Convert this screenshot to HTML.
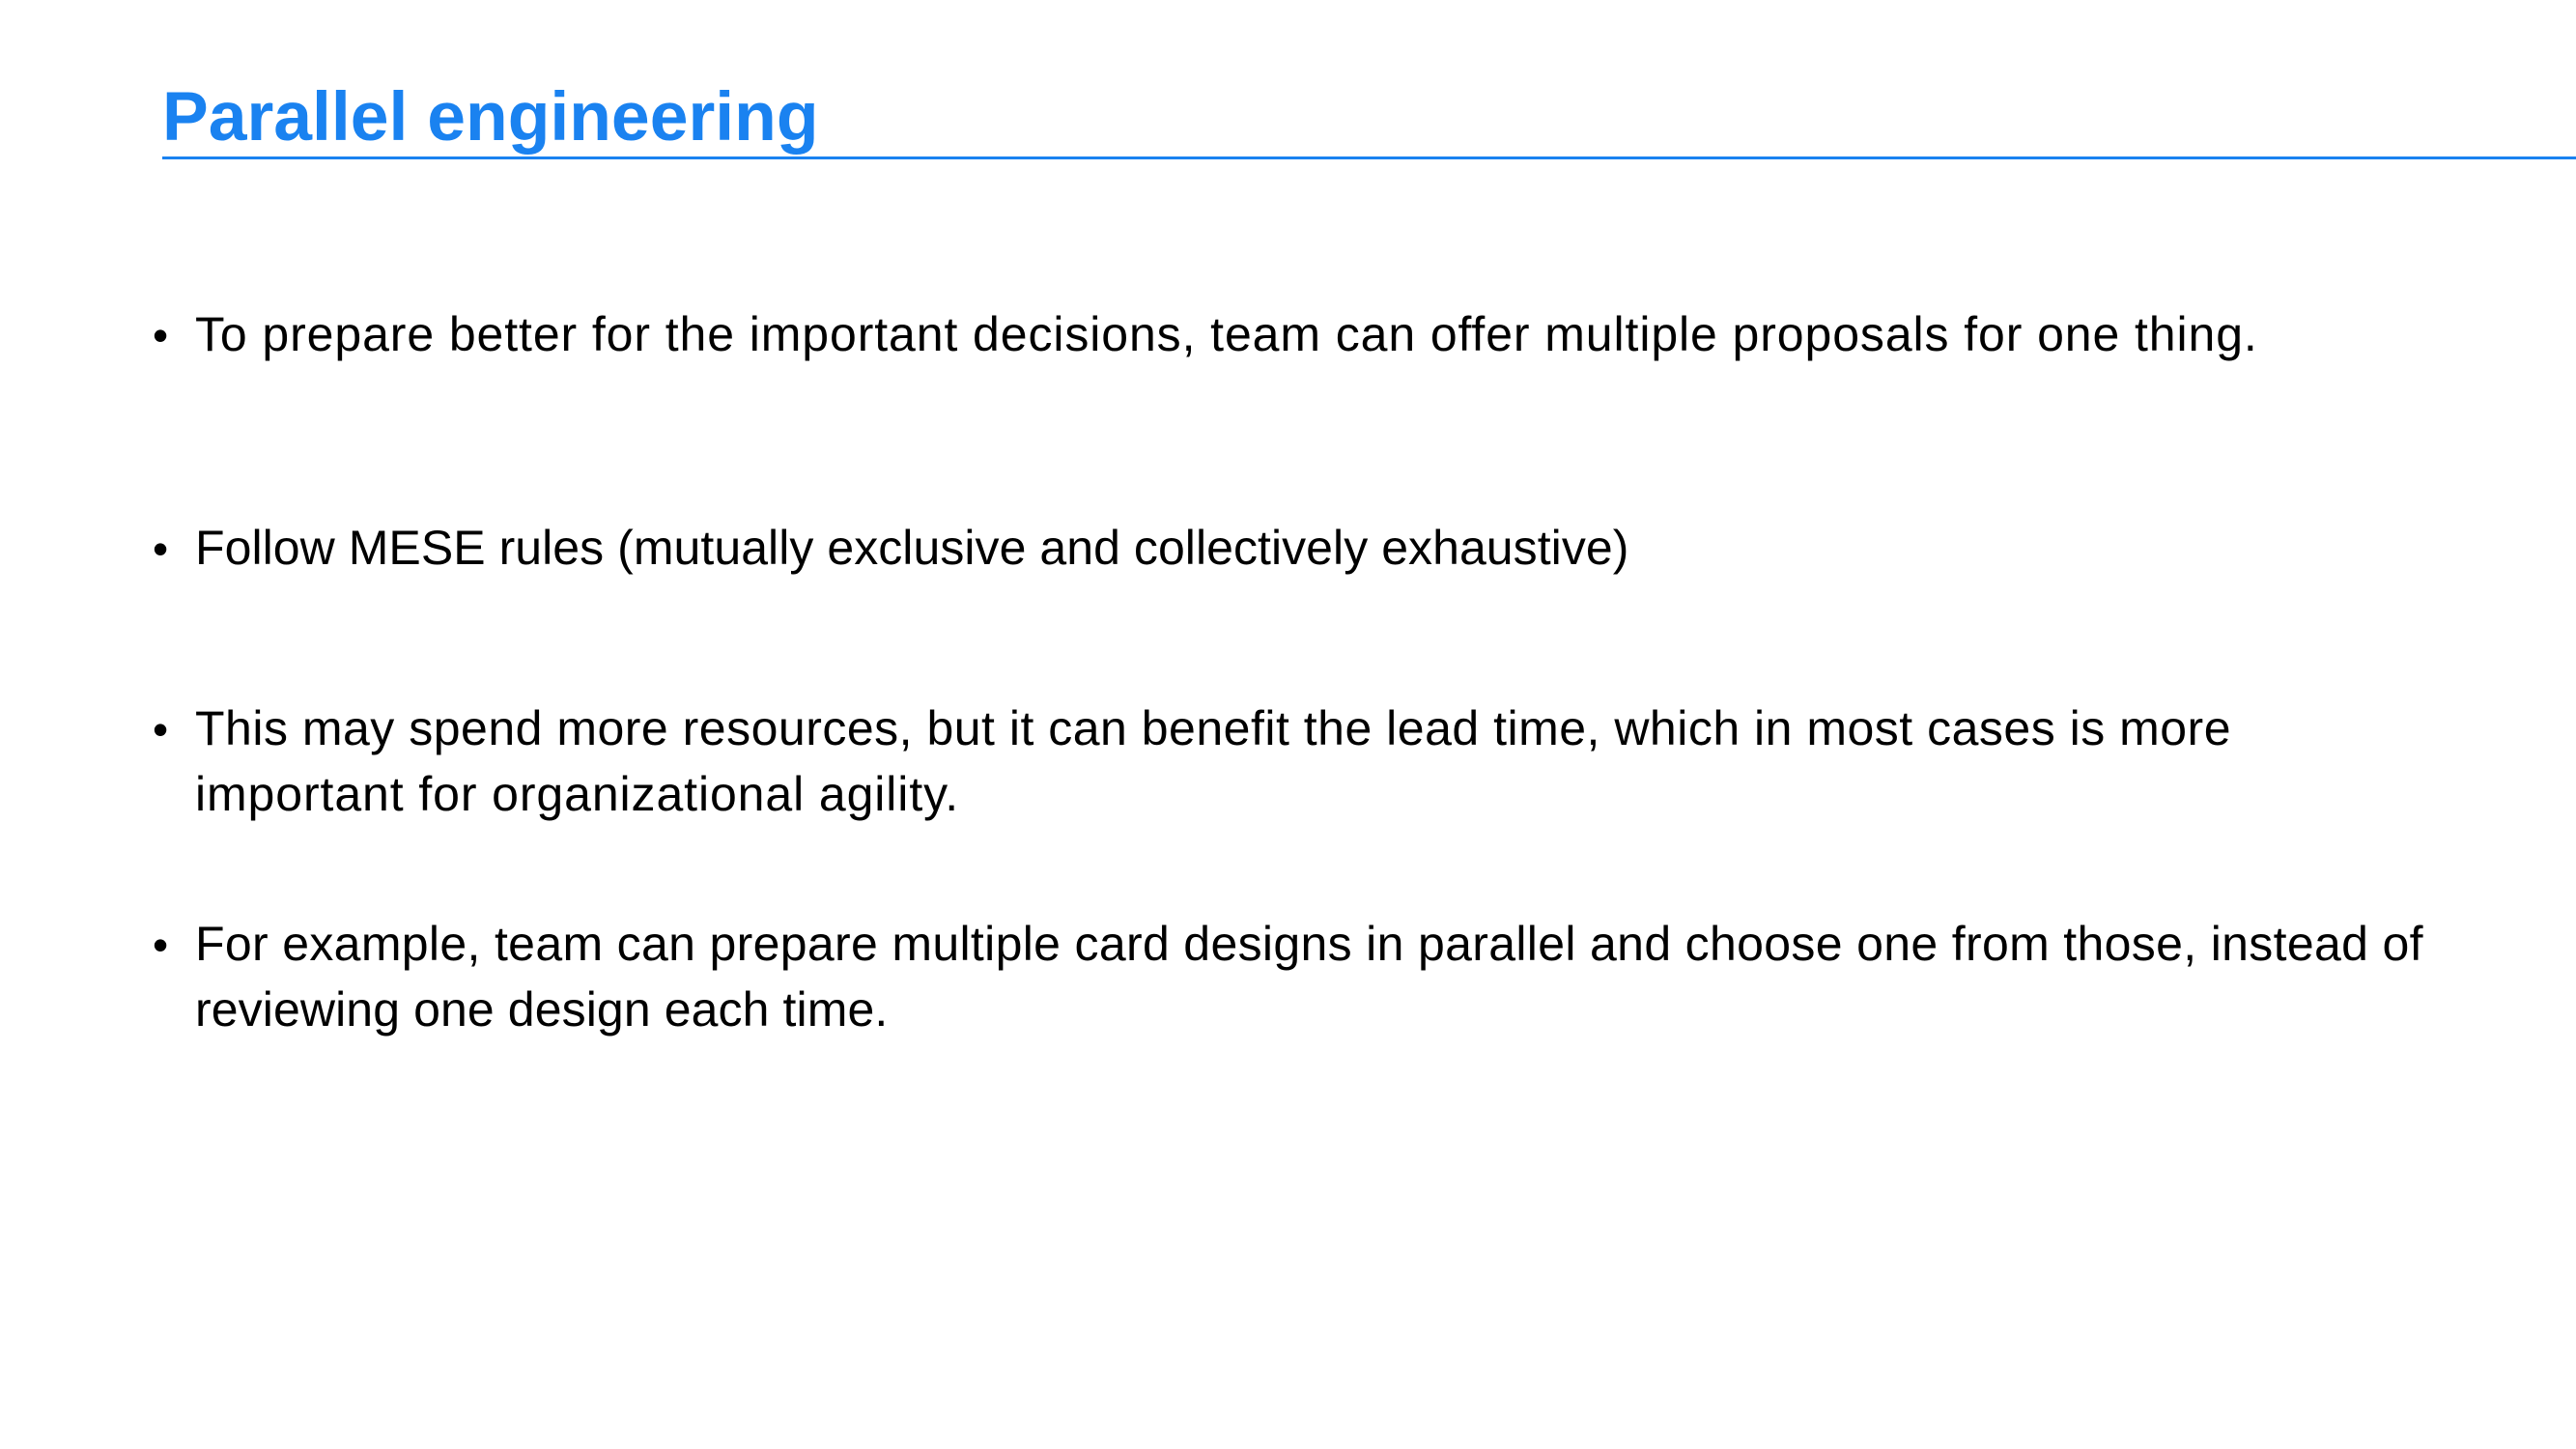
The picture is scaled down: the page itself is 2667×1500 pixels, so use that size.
<!DOCTYPE html>
<html><head><meta charset="utf-8"><style>
html,body{margin:0;padding:0;background:#fff;}
body{width:2667px;height:1500px;position:relative;overflow:hidden;font-family:"Liberation Sans",sans-serif;}
.t{position:absolute;left:168px;top:80px;font-size:71.5px;font-weight:bold;color:#1a82f0;white-space:nowrap;}
.rule{position:absolute;left:168px;top:162px;width:2499px;height:3px;background:#1a82f0;}
.l{position:absolute;left:202px;font-size:50px;letter-spacing:0.9px;color:#000;white-space:nowrap;line-height:68px;}
.b{position:absolute;left:158px;font-size:46px;line-height:68px;}
</style></head><body>
<div class="t">Parallel engineering</div>
<div class="rule"></div>
<div class="b" style="top:313px">•</div>
<div class="l" style="top:312px">To prepare better for the important decisions, team can offer multiple proposals for one thing.</div>
<div class="b" style="top:534px">•</div>
<div class="l" style="top:533px;letter-spacing:0.05px">Follow MESE rules (mutually exclusive and collectively exhaustive)</div>
<div class="b" style="top:721px">•</div>
<div class="l" style="top:720px"><span style="letter-spacing:0.5px">This may spend more resources, but it can benefit the lead time, which in most cases is more</span><br>important for organizational agility.</div>
<div class="b" style="top:944px">•</div>
<div class="l" style="top:943px"><span style="letter-spacing:0.33px">For example, team can prepare multiple card designs in parallel and choose one from those, instead of</span><br><span style="letter-spacing:0.1px">reviewing one design each time.</span></div>
</body></html>
